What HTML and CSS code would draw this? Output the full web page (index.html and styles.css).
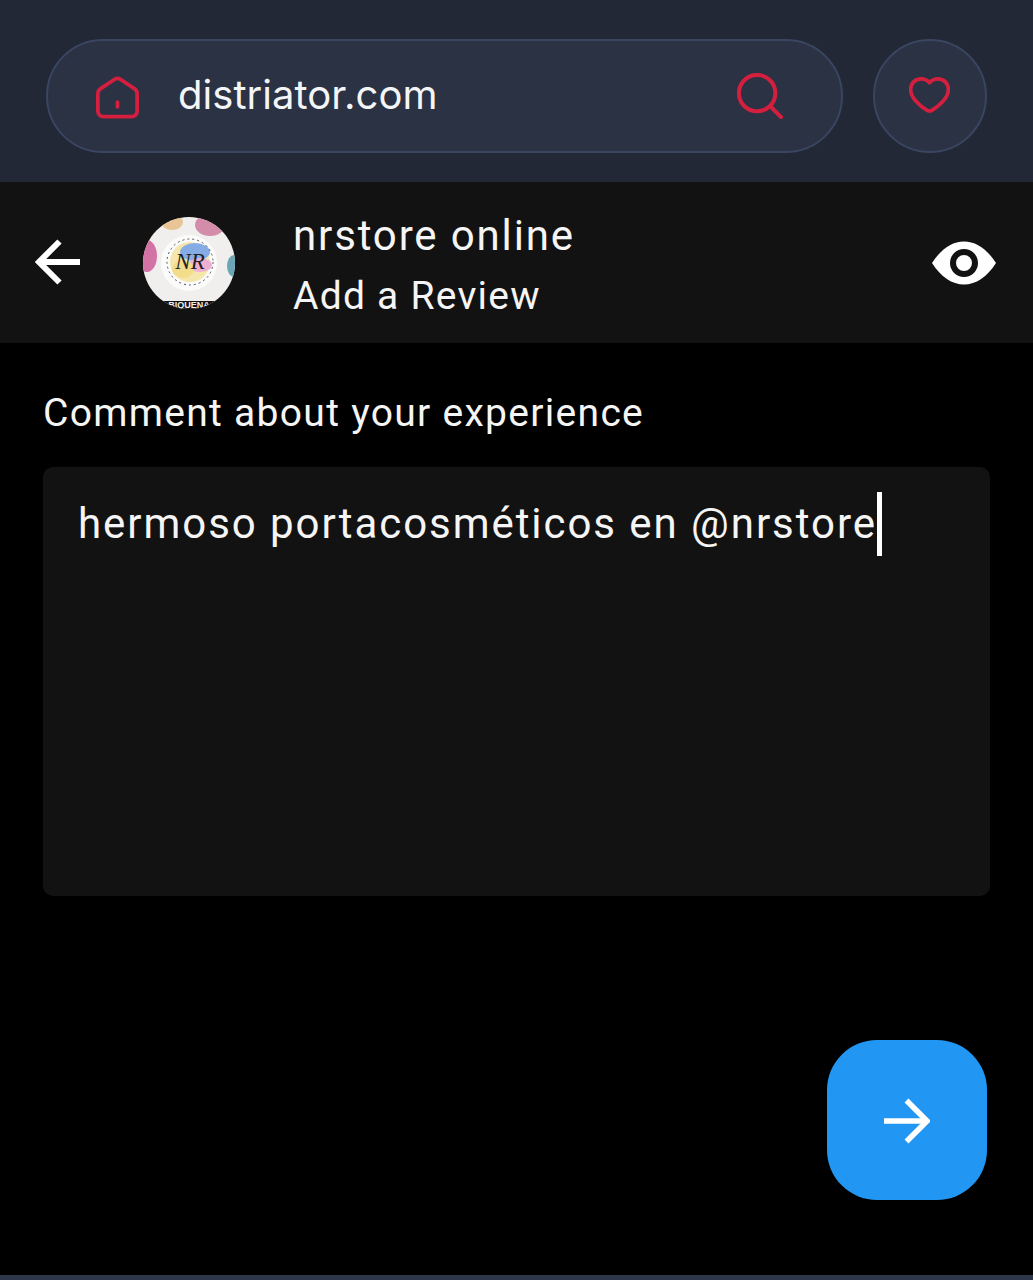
FILE: index.html
```html
<!DOCTYPE html>
<html lang="en">
<head>
    <meta charset="UTF-8">
    <meta name="viewport" content="width=device-width, initial-scale=1.0">
    <title>Add a Review</title>
    <link rel="stylesheet" href="styles.css">
</head>
<body>
    <div class="top-bar">
        <div class="search-pill">
            <svg class="icon-home" viewBox="0 0 46 46" fill="none" stroke="#d41f3f" stroke-width="4" stroke-linejoin="round" stroke-linecap="round">
                <path d="M20 3.500 Q23 1.600 26 3.500 L41 13.500 Q44 15.500 44 19 V37 Q44 43.500 37.500 43.500 H8.500 Q2 43.500 2 37 V19 Q2 15.500 5 13.500 Z"/>
                <path d="M23 28 V33"/>
            </svg>
            <span class="site-name">distriator.com</span>
            <svg class="icon-search" viewBox="0 0 48 48" fill="none" stroke="#d41f3f" stroke-width="4.200" stroke-linecap="round">
                <circle cx="21" cy="21" r="19"/>
                <path d="M35 35 L46 46"/>
            </svg>
        </div>
        <div class="heart-btn">
            <svg class="icon-heart" viewBox="0 0 44 38" fill="none" stroke="#d41f3f" stroke-width="4" stroke-linejoin="round">
                <path d="M22 6 C25 2.500 28 1.800 31 1.800 C38 1.800 42.300 7 42.300 13 C42.300 22 32 31 24.500 35.500 Q22 37 19.500 35.500 C12 31 1.700 22 1.700 13 C1.700 7 6 1.800 13 1.800 C16 1.800 19 2.500 22 6 Z"/>
            </svg>
        </div>
    </div>

    <div class="page-header">
        <svg class="icon-back" viewBox="0 0 46 46" fill="none" stroke="#fff" stroke-width="6">
            <path d="M46 23 H5"/>
            <path d="M25.500 2.500 L5 23 L25.500 43.500"/>
        </svg>
        <div class="avatar">
            <svg viewBox="0 0 92 92">
                <rect width="92" height="92" fill="#f1efee"/>
                <ellipse cx="29" cy="5" rx="11" ry="8" fill="#e9c596"/>
                <ellipse cx="67" cy="8" rx="15" ry="11" fill="#d48cab"/>
                <ellipse cx="4" cy="39" rx="10" ry="16" fill="#d272a5"/>
                <ellipse cx="91" cy="49" rx="7" ry="11" fill="#6aa6b6"/>
                <circle cx="46" cy="46" r="28" fill="#fbfbfb"/>
                <circle cx="47" cy="45" r="20" fill="#f5e6ab"/>
                <ellipse cx="52" cy="35" rx="15" ry="9" fill="#86ace6"/>
                <ellipse cx="57" cy="48" rx="12" ry="7" fill="#eeb0d2"/>
                <ellipse cx="40" cy="52" rx="11" ry="9" fill="#f3dc8a"/>
                <circle cx="47" cy="45" r="23" fill="none" stroke="#555" stroke-width="1" stroke-dasharray="2 3"/>
                <text class="avatar-mark" x="47" y="52" text-anchor="middle">NR</text>
                <rect x="18" y="84" width="56" height="8" fill="#121212"/>
                <text class="avatar-foot" x="46" y="91" text-anchor="middle">BIQUEÑA</text>
            </svg>
        </div>
        <div class="header-titles">
            <div class="store-name">nrstore online</div>
            <div class="header-sub">Add a Review</div>
        </div>
        <svg class="icon-eye" viewBox="0 0 64 44">
            <path d="M0 22 C9 8 20 0.500 32 0.500 C44 0.500 55 8 64 22 C55 36 44 43.500 32 43.500 C20 43.500 9 36 0 22 Z" fill="#fff"/>
            <circle cx="32" cy="22" r="11" fill="#fff" stroke="#121212" stroke-width="6"/>
        </svg>
    </div>

    <div class="content">
        <div class="field-label">Comment about your experience</div>
        <div class="comment-box">
            <span class="comment-text">hermoso portacosméticos en @nrstore</span><span class="caret"></span>
        </div>
        <div class="actions">
            <div class="next-btn">
                <svg class="icon-next" viewBox="0 0 46 46" fill="none" stroke="#fff" stroke-width="5.500">
                    <path d="M0 23 H41"/>
                    <path d="M22.500 2.500 L43 23 L22.500 43.500"/>
                </svg>
            </div>
        </div>
    </div>
    <div class="bottom-line"></div>
</body>
</html>
```

FILE: styles.css
```css
html, body {
    margin: 0;
    padding: 0;
}
body {
    width: 1033px;
    height: 1280px;
    overflow: hidden;
    background-color: black;
    color: white;
    font-family: Roboto, sans-serif;
    display: flex;
    flex-direction: column;
}
.top-bar {
    height: 182px;
    box-sizing: border-box;
    padding: 39px 46px 0 46px;
    background-color: #222836;
    display: flex;
    gap: 30px;
}
.search-pill {
    width: 797px;
    height: 114px;
    box-sizing: border-box;
    border: 2px solid #3a4661;
    border-radius: 57px;
    background-color: #2a3244;
    display: flex;
    align-items: center;
    padding-left: 48px;
}
.icon-home {
    width: 43px;
    height: 43px;
    margin-top: 3px;
    flex: none;
}
.site-name {
    font-family: Inter, sans-serif;
    font-size: 40px;
    margin-left: 39px;
    margin-bottom: 3px;
    width: 559px;
    flex: none;
    color: #f4f5f7;
    letter-spacing: 0.05px;
}
.icon-search {
    width: 46px;
    height: 46px;
    flex: none;
}
.heart-btn {
    width: 114px;
    height: 114px;
    box-sizing: border-box;
    border: 2px solid #3a4661;
    border-radius: 50%;
    background-color: #2a3244;
    display: flex;
    align-items: center;
    justify-content: center;
}
.icon-heart {
    width: 41px;
    height: 38px;
    margin: 0 2px 2px 0;
}
.page-header {
    height: 161px;
    box-sizing: border-box;
    background-color: #121212;
    display: flex;
    align-items: center;
    padding-left: 34px;
}
.icon-back {
    width: 46px;
    height: 46px;
    margin-bottom: 2px;
    flex: none;
}
.avatar {
    width: 92px;
    height: 92px;
    border-radius: 50%;
    overflow: hidden;
    margin-left: 63px;
    flex: none;
}
.avatar svg {
    display: block;
    width: 92px;
    height: 92px;
}
.avatar-mark {
    font-family: "Liberation Serif", serif;
    font-style: italic;
    font-size: 23px;
    fill: #222;
}
.avatar-foot {
    font-family: "Liberation Sans", sans-serif;
    font-weight: bold;
    font-size: 9px;
    fill: #f1efee;
}
.header-titles {
    margin-left: 58px;
    width: 639px;
    flex: none;
    display: flex;
    flex-direction: column;
    gap: 16px;
    padding-top: 6px;
}
.store-name, .header-sub {
    font-size: 42px;
    line-height: 44px;
    letter-spacing: 1.85px;
    color: #f5f5f5;
}
.header-sub {
    font-size: 39px;
    letter-spacing: 1.25px;
}
.icon-eye {
    width: 64px;
    height: 44px;
    flex: none;
}
.content {
    flex: 1;
    padding: 48px 43px 0 43px;
    display: flex;
    flex-direction: column;
}
.field-label {
    font-size: 39px;
    line-height: 44px;
    letter-spacing: 1.3px;
    color: #f5f5f5;
}
.comment-box {
    width: 947px;
    height: 429px;
    box-sizing: border-box;
    margin-top: 32px;
    padding: 25px 0 0 35px;
    background-color: #121212;
    border-radius: 10px;
    display: flex;
    align-items: flex-start;
}
.comment-text {
    font-size: 42px;
    line-height: 64px;
    letter-spacing: 1.95px;
    color: #f5f5f5;
}
.caret {
    width: 5px;
    height: 64px;
    background-color: white;
}
.actions {
    display: flex;
    justify-content: flex-end;
    margin-top: 144px;
    padding-right: 3px;
}
.next-btn {
    width: 160px;
    height: 160px;
    border-radius: 50px;
    background-color: #2196f3;
    display: flex;
    align-items: center;
    justify-content: center;
}
.icon-next {
    width: 46px;
    height: 46px;
    margin-top: 1px;
}
.bottom-line {
    height: 5px;
    background-color: #2d3548;
}
```
